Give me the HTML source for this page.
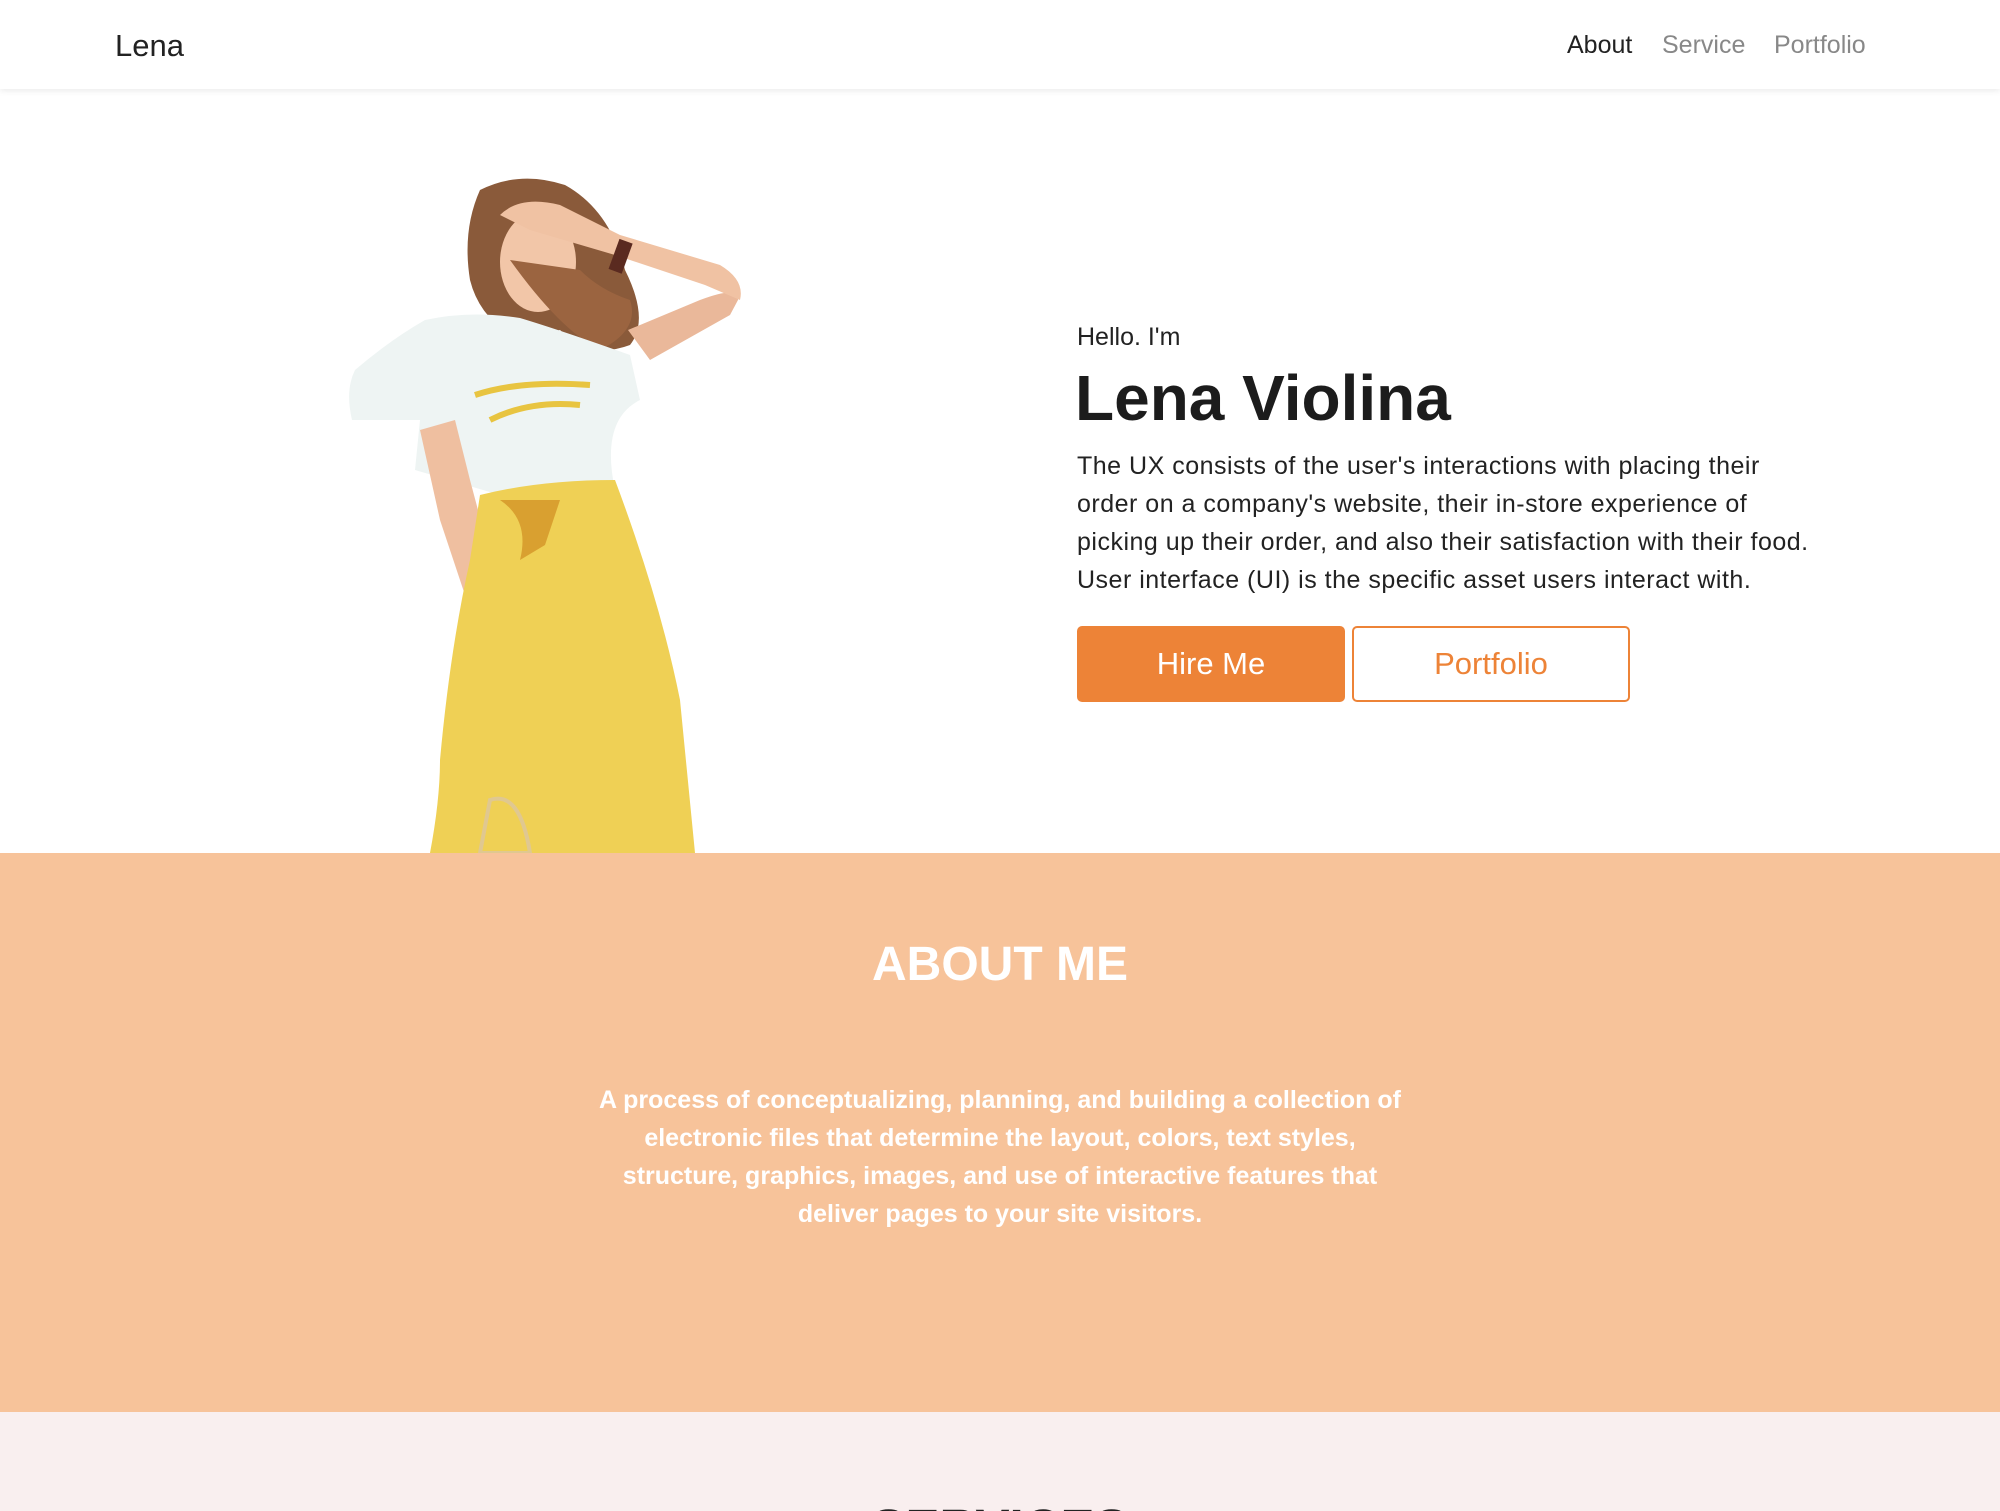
<!DOCTYPE html>
<html><head><meta charset="utf-8"><style>
*{margin:0;padding:0;box-sizing:border-box}
html,body{width:2000px;height:1511px;overflow:hidden}
body{font-family:"Liberation Sans",sans-serif;background:#fff;position:relative;color:#222}
.nav{position:absolute;left:0;top:0;width:2000px;height:89px;background:#fff;box-shadow:0 2px 6px rgba(0,0,0,.08);z-index:2}
.logo{position:absolute;left:115px;top:28px;font-size:31px;color:#222}
.links{position:absolute;top:31px;font-size:25px;color:#888}
.abs{position:absolute}
.about{position:absolute;left:0;top:853px;width:2000px;height:559px;background:#f7c39a}
.serv{position:absolute;left:0;top:1412px;width:2000px;height:99px;background:#f9efef;overflow:hidden}
p.t{font-size:25px;line-height:38px;white-space:nowrap}
</style></head><body>
<div class="nav"><div class="logo">Lena</div>
<div class="links" style="left:1567px;color:#222">About</div>
<div class="links" style="left:1662px">Service</div>
<div class="links" style="left:1774px">Portfolio</div></div>

<svg class="abs" style="left:340px;top:170px" width="420" height="683" viewBox="340 170 420 683">
<path d="M480 190 Q520 170 565 185 Q610 210 625 270 Q650 320 630 345 Q590 360 560 330 L520 340 Q480 320 470 280 Q462 230 480 190Z" fill="#8a5a3a"/>
<ellipse cx="538" cy="262" rx="38" ry="50" fill="#f2c6a8"/>
<path d="M628 330 L700 300 Q740 285 738 300 L730 315 L650 360 Z" fill="#eab89a"/>
<path d="M740 300 Q745 280 720 265 L620 235 L560 205 Q520 195 500 215 L530 230 L615 255 L705 285 Z" fill="#f0c2a3"/>
<rect x="614" y="240" width="14" height="32" fill="#5a2a20" transform="rotate(20 620 255)"/>
<path d="M510 260 Q560 330 600 350 Q640 330 630 300 Q600 290 580 270 Z" fill="#9b6440"/>
<path d="M425 320 Q470 310 520 318 Q560 330 630 355 L640 400 Q600 420 615 490 L500 495 L415 470 L420 420 L352 420 Q345 390 355 370 Q390 340 425 320Z" fill="#eef4f3"/>
<path d="M475 395 Q520 380 590 385" stroke="#e8c440" stroke-width="6" fill="none"/>
<path d="M490 420 Q530 400 580 405" stroke="#e8c440" stroke-width="6" fill="none"/>
<path d="M420 430 L440 520 L480 640 L500 810 L520 820 L510 630 L470 480 L455 420Z" fill="#efbfa0"/>
<path d="M480 495 Q540 480 615 480 Q660 600 680 700 L695 853 L430 853 Q440 800 440 760 Q450 650 470 560 Z" fill="#efd055"/>
<path d="M500 500 Q530 520 520 560 L545 545 L560 500Z" fill="#d9a030"/>
<path d="M480 853 L490 800 Q520 790 530 853Z" fill="none" stroke="#e0c890" stroke-width="4"/>
</svg>

<div class="abs" style="left:1077px;top:323px;font-size:25px">Hello. I'm</div>
<div class="abs" style="left:1075px;top:361px;font-size:64px;font-weight:bold;color:#1c1c1c">Lena Violina</div>
<p class="abs t" style="left:1077px;top:447px;letter-spacing:0.5px">The UX consists of the user's interactions with placing their<br>order on a company's website, their in-store experience of<br>picking up their order, and also their satisfaction with their food.<br>User interface (UI) is the specific asset users interact with.</p>
<div class="abs" style="left:1077px;top:626px;width:268px;height:76px;background:#ed8337;border-radius:5px;color:#fff;font-size:31px;text-align:center;line-height:76px">Hire Me</div>
<div class="abs" style="left:1352px;top:626px;width:278px;height:76px;border:2px solid #ed8337;border-radius:5px;color:#ed8337;font-size:31px;text-align:center;line-height:72px">Portfolio</div>

<div class="about">
<div class="abs" style="left:0;top:84px;width:2000px;text-align:center;color:#fff;font-size:48px;font-weight:bold">ABOUT ME</div>
<p class="abs t" style="left:0;top:228px;width:2000px;text-align:center;color:#fff;font-weight:bold;font-size:25px">A process of conceptualizing, planning, and building a collection of<br>electronic files that determine the layout, colors, text styles,<br>structure, graphics, images, and use of interactive features that<br>deliver pages to your site visitors.</p>
</div>
<div class="serv"><div class="abs" style="left:0;top:86px;width:2000px;text-align:center;font-size:51px;font-weight:bold;color:#222">SERVICES</div></div>
</body></html>
